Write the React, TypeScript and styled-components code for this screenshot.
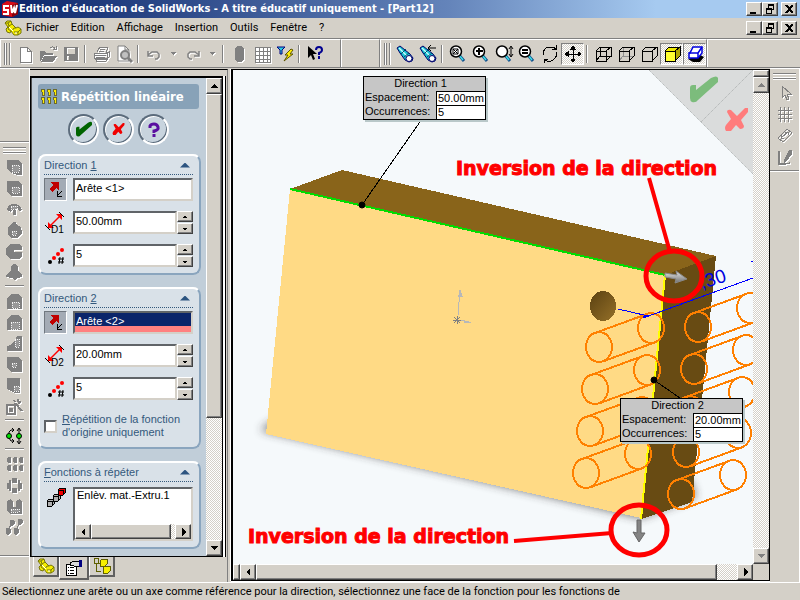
import React from "react";
import styled, { createGlobalStyle, css } from "styled-components";

const FACE = "#d4d0c8";
const UI = 'Roboto, "DejaVu Sans Condensed", sans-serif';
const PANEL = '"Liberation Sans", Arial, sans-serif';

const Global = createGlobalStyle`
  * { box-sizing: border-box; }
  body { margin: 0; background: ${FACE}; font: 11px/14px ${UI}; color: #000; overflow: hidden; }
  button, input { font: inherit; color: inherit; margin: 0; padding: 0; border-radius: 0; }
`;

const raised = css`
  background: ${FACE};
  border: 1px solid;
  border-color: #fff #404040 #404040 #fff;
  box-shadow: inset -1px -1px #808080;
`;
const sunken = css`
  border: 2px solid;
  border-color: #606468 #d4d0c8 #d4d0c8 #606468;
`;
const dither = css`
  background: repeating-conic-gradient(#fff 0 25%, ${FACE} 0 50%) 0 0 / 2px 2px;
`;

/* ---------- window frame ---------- */
const Window = styled.div`
  display: flex;
  flex-direction: column;
  height: 100vh;
`;
const TitleBar = styled.header`
  display: flex;
  align-items: center;
  height: 18px;
  padding: 0 3px 0 1px;
  background: linear-gradient(90deg, #0a246a 0%, #6484ba 56%, #a6caf0 82%);
  color: #fff;
`;
const Title = styled.h1`
  flex: 1;
  margin: 0;
  font: bold 11px/18px "DejaVu Sans Condensed", "DejaVu Sans", sans-serif;
  white-space: nowrap;
`;
const WinButtons = styled.div`
  display: flex;
  margin-left: auto;
  button:last-child { margin-left: 3px; }
`;
const WinButton = styled.button`
  ${raised}
  display: flex;
  width: 16px;
  height: 14px;
  color: #000;
`;
const MenuBar = styled.nav`
  display: flex;
  align-items: center;
  gap: 12px;
  height: 20px;
  padding: 0 3px 0 4px;
`;
const MenuItem = styled.button`
  border: 0;
  background: none;
`;
const AppMark = styled.span`
  display: flex;
  margin-right: -8px;
`;
const ToolStrip = styled.div`
  display: flex;
  height: 30px;
  border-top: 1px solid #808080;
  border-bottom: 1px solid #808080;
`;
const ToolGroup = styled.div<{ $w?: number }>`
  display: flex;
  align-items: center;
  flex: none;
  min-width: ${(p) => p.$w ?? 0}px;
  padding: 0 0 0 3px;
  border-top: 1px solid #fff;
  border-left: 1px solid #fff;
  border-right: 1px solid #808080;
`;
const ToolFill = styled.div`
  flex: 1;
  border-top: 1px solid #fff;
  border-left: 1px solid #fff;
`;
const Grip = styled.span`
  width: 6px;
  height: 22px;
  margin-right: 3px;
  border: solid;
  border-width: 0 1px;
  border-color: #808080;
  box-shadow: inset 1px 0 #fff, 1px 0 #fff, inset -2px 0 ${FACE}, inset -3px 0 #808080;
`;
const Rule = styled.span`
  width: 2px;
  height: 18px;
  margin: 0 3px 0 2px;
  border-left: 1px solid #808080;
  border-right: 1px solid #fff;
`;
const Tool = styled.button<{ $on?: boolean; $narrow?: boolean }>`
  display: flex;
  align-items: center;
  justify-content: center;
  width: ${(p) => (p.$narrow ? 16 : 23)}px;
  height: 22px;
  border: 1px solid transparent;
  background: none;
  ${(p) => p.$on && css`${dither} border-color: #808080 #fff #fff #808080;`}
`;
const Glyph = styled.svg<{ $off?: boolean; $smooth?: boolean }>`
  display: block;
  flex: none;
  overflow: visible;
  shape-rendering: ${(p) => (p.$smooth ? "auto" : "crispEdges")};
  ${(p) => p.$off && css`filter: drop-shadow(1px 1px 0 #fff);`}
`;

const Workspace = styled.main`
  display: flex;
  flex: 1;
  min-height: 0;
`;

/* ---------- side tool columns ---------- */
const SideTools = styled.div`
  display: flex;
  flex-direction: column;
  align-items: center;
  flex: none;
  width: 30px;
  border-top: 1px solid #fff;
  border-right: 1px solid #fff;
`;
const SideSpacer = styled.div`
  align-self: stretch;
  height: 74px;
  border-bottom: 1px solid #fff;
  box-shadow: inset 0 -1px #808080;
`;
const SideGrip = styled.span`
  width: 23px;
  height: 6px;
  margin: 4px 0 4px;
  border: solid #808080;
  border-width: 1px 0;
  box-shadow: inset 0 1px #fff, inset 0 -1px #fff, 0 1px #fff;
`;
const SideRule = styled.span`
  width: 19px;
  height: 2px;
  margin: 2px 0 4px;
  border-top: 1px solid #808080;
  border-bottom: 1px solid #fff;
`;
const SideTool = styled.button`
  display: flex;
  align-items: center;
  justify-content: center;
  width: 23px;
  height: 21px;
  border: 0;
  background: none;
`;
const SideEnd = styled.div<{ $top?: number }>`
  flex: 1;
  align-self: stretch;
  margin-top: ${(p) => p.$top ?? 0}px;
  border-top: 1px solid #808080;
  box-shadow: inset 0 1px #fff;
`;

/* ---------- property manager ---------- */
const Manager = styled.section`
  display: flex;
  flex-direction: column;
  flex: none;
  width: 198px;
  margin-top: 1px;
  border-top: 1px solid #000;
  border-right: 1px solid #808080;
  font: 11px/13px ${PANEL};
`;
const Frame = styled.div`
  display: flex;
  flex: 1;
  min-height: 0;
  margin: 6px 4px 0 0;
  padding-left: 1px;
  border: solid #000;
  border-width: 2px 1px 1px 1px;
  box-shadow: inset 1px 0 #505050, 2px 0 #fff, 3px 0 #000;
  background: ${FACE};
`;
const Sheet = styled.div`
  flex: 1;
  min-width: 0;
  padding: 6px 5px 0 6px;
  background: #c1ced9;
  overflow: hidden;
`;
const Heading = styled.h2`
  display: flex;
  align-items: center;
  gap: 3px;
  height: 25px;
  margin: 0 2px 0 0;
  padding-left: 3px;
  border-radius: 3px;
  background: #88a2b8;
  color: #fff;
  font: bold 13px/25px "DejaVu Sans Condensed", sans-serif;
  white-space: nowrap;
`;
const Actions = styled.div`
  display: flex;
  gap: 4px;
  margin: 5px 0 9px 30px;
`;
const Round = styled.button`
  display: flex;
  align-items: center;
  justify-content: center;
  width: 31px;
  height: 31px;
  border: 2px solid;
  border-color: #5c6c7c #fff #fff #5c6c7c;
  border-radius: 50%;
  box-shadow: inset 1px 1px #fff, inset -1px -1px #5c6c7c;
  background: #c8d4de;
`;
const Group = styled.fieldset`
  display: flex;
  flex-direction: column;
  gap: 10px;
  min-width: 0;
  margin: 0 0 12px;
  padding: 0 6px 6px 4px;
  border: 2px solid;
  border-color: #fff #8aa5be #8aa5be #fff;
  border-radius: 8px;
  background: #d9e1e8;
  color: #34597c;
`;
const GroupTitle = styled.div`
  display: flex;
  align-items: center;
  justify-content: space-between;
  height: 19px;
  margin-bottom: -7px;
  padding-right: 3px;
  border-bottom: 1px dotted #34597c;
`;
const Fold = styled.button`
  width: 10px;
  height: 5px;
  border: 0;
  background: #2c5480;
  clip-path: polygon(50% 0, 100% 100%, 0 100%);
`;
const Row = styled.div`
  display: flex;
  align-items: flex-start;
  gap: 6px;
  color: #000;
`;
const Flip = styled.button`
  display: flex;
  align-items: center;
  justify-content: center;
  flex: none;
  width: 23px;
  height: 23px;
  background: #a3abb5;
  border: 1px solid;
  border-color: #707880 #fff #fff #707880;
`;
const RowIcon = styled.label`
  display: flex;
  align-items: center;
  justify-content: center;
  flex: none;
  width: 23px;
  height: 23px;
`;
const Field = styled.input<{ $picked?: boolean }>`
  ${sunken}
  flex: 1;
  min-width: 0;
  height: 23px;
  padding: 0 2px 4px 1px;
  outline: 0;
  background: #fff;
  ${(p) => p.$picked && css`
    color: #fff;
    background: linear-gradient(#0a246a 0 13px, #ff8080 13px);
  `}
`;
const SpinField = styled.div`
  display: flex;
  flex: 1;
  min-width: 0;
`;
const Spinner = styled.span`
  display: flex;
  flex-direction: column;
  flex: none;
  width: 16px;
  height: 23px;
  justify-content: space-between;
`;
const SpinButton = styled.button`
  ${raised}
  display: flex;
  align-items: center;
  justify-content: center;
  height: 11px;
`;
const Check = styled.label`
  display: flex;
  align-items: center;
  gap: 5px;
  margin: 3px 0 2px;
  white-space: nowrap;
`;
const CheckBox = styled.input`
  ${sunken}
  appearance: none;
  flex: none;
  width: 13px;
  height: 13px;
  margin: 0;
  background: #fff;
`;
const List = styled.div`
  ${sunken}
  display: flex;
  flex-direction: column;
  justify-content: space-between;
  flex: 1;
  min-width: 0;
  height: 54px;
  margin-top: 2px;
  padding-top: 0;
  background: #fff;
`;
const ListItem = styled.span`
  padding-left: 2px;
`;
const Tabs = styled.div`
  display: flex;
  align-items: flex-start;
  height: 25px;
  padding-left: 3px;
`;
const Tab = styled.button<{ $active?: boolean }>`
  display: flex;
  align-items: center;
  justify-content: center;
  width: ${(p) => (p.$active ? 30 : 26)}px;
  height: ${(p) => (p.$active ? 23 : 20)}px;
  border: solid;
  border-width: 0 2px 2px 1px;
  border-color: #808080 #606060 #606060 #fff;
  background: ${FACE};
`;

/* ---------- scroll bars ---------- */
const ScrollTrack = styled.div<{ $across?: boolean }>`
  ${dither}
  display: flex;
  flex: ${(p) => (p.$across ? "0 0 15px" : "none")};
  flex-direction: ${(p) => (p.$across ? "row" : "column")};
  ${(p) => !p.$across && "width: 16px;"}
`;
const ScrollButton = styled.button`
  ${raised}
  display: flex;
  align-items: center;
  justify-content: center;
  flex: 0 0 16px;
`;
const Thumb = styled.div<{ $share: number }>`
  ${raised}
  flex: ${(p) => p.$share} 1 0;
`;
const Gap = styled.div<{ $share: number }>`
  flex: ${(p) => p.$share} 1 0;
`;
const Splitter = styled.div`
  ${raised}
  flex: 0 0 7px;
`;

/* ---------- model view ---------- */
const View = styled.section`
  display: flex;
  flex-direction: column;
  flex: 1;
  min-width: 0;
  margin: 1px 0 1px 3px;
  border: solid #000;
  border-width: 1px 1px 1px 2px;
  box-shadow: -1px 0 #fff, 0 1px #fff;
`;
const ViewRow = styled.div`
  display: flex;
  flex: 1;
  min-height: 0;
`;
const BottomBar = styled.div`
  display: flex;
  flex: 0 0 16px;
  padding-right: 16px;
  background: ${FACE};
`;
const BottomTrack = styled.div`
  ${dither}
  display: flex;
  flex: 1;
  min-width: 0;
`;
const Canvas = styled.div`
  position: relative;
  flex: 1;
  min-width: 0;
  overflow: hidden;
  background: #f5f9fb;
`;
const Scene = styled.svg`
  display: block;
  width: 100%;
  height: 100%;
`;
const Corner = styled.svg`
  position: absolute;
  top: 0;
  right: 0;
`;
const Callout = styled.div<{ $x: number; $y: number }>`
  position: absolute;
  left: ${(p) => p.$x}px;
  top: ${(p) => p.$y}px;
  display: grid;
  grid-template-columns: 72px 49px;
  grid-auto-rows: 14px;
  border: 1px solid #000;
  background: #c6c6c6;
  box-shadow: 2px 2px #b9c8c9;
  font: 11px/13px ${PANEL};
`;
const CalloutTitle = styled.strong`
  grid-column: 1 / -1;
  padding-right: 8px;
  font-weight: normal;
  text-align: center;
`;
const CalloutLabel = styled.label`
  padding-left: 1px;
`;
const CalloutValue = styled.input`
  width: 49px;
  height: 14px;
  padding: 0 0 1px 1px;
  border: solid #000;
  border-width: 1px 0 0 1px;
  outline: 0;
  background: #fff;
  line-height: 12px;
`;
const Status = styled.footer`
  height: 18px;
  padding: 2px 2px 0;
  border-top: 1px solid #fff;
  white-space: nowrap;
  overflow: hidden;
`;

/* ---------- glyphs ---------- */
type ArrowDir = "up" | "down" | "left" | "right";
const arrowPoints: Record<ArrowDir, string> = {
  up: "3,0 4,0 7,4 0,4",
  down: "0,0 7,0 4,4 3,4",
  left: "4,0 4,8 0,4",
  right: "1,0 1,8 5,4",
};
const Arrow = ({ dir, color = "#000" }: { dir: ArrowDir; color?: string }) => {
  const flat = dir === "up" || dir === "down";
  return (
    <Glyph width={flat ? 7 : 5} height={flat ? 4 : 8}>
      <polygon points={arrowPoints[dir]} fill={color} />
    </Glyph>
  );
};
const TinyArrow = ({ up }: { up?: boolean }) => (
  <Glyph width="4" height="2">
    <path d={up ? "M1 0h2v1h1v1H0V1h1z" : "M0 0h4v1H3v1H1V1H0z"} />
  </Glyph>
);

const winGlyphs: Record<string, React.ReactNode> = {
  Réduire: <path d="M3 9h6v2H3z" />,
  Restaurer: <path d="M5 1h6v6H9v4H3V5h2zM6 3v2h3v1h1V3zM4 7v3h4V7z" fillRule="evenodd" />,
  Fermer: <path d="M3 2h2l2 2 2-2h2v1L8 6l3 3v1H9L7 8l-2 2H3V9l3-3-3-3z" />,
};
const WindowButtons = () => (
  <WinButtons>
    {Object.entries(winGlyphs).map(([name, g]) => (
      <WinButton key={name} aria-label={name}>
        <Glyph width="14" height="12">{g}</Glyph>
      </WinButton>
    ))}
  </WinButtons>
);

const PartIcon = () => (
  <Glyph width="18" height="16" $smooth>
    <g stroke="#77770a" strokeLinejoin="round" fill="#f4ec00">
      <path d="M1 3l2-2h4l1 3 4 4 2-1 3 2v4l-3 2h-4l-3-4-1 2-3-1-1-3 2-2z" />
      <path d="M1 3h3l1 3-1 3M4 3l3-2M5 6l3-2M8 11l2-3 2 0M10 12h4l3-3M14 12v3M4 9l3 2" fill="none" />
    </g>
    <path d="M5 7l4 4M11 13h2" stroke="#fff" />
  </Glyph>
);

const G = "#808080";
const cube = (
  <>
    <path d="M2 6h10v10H2zM6 2h11v9H6z" />
    <path d="M2 6l4-4M12 6l5-4M12 16l5-5M2 16l4-5" />
  </>
);
const openCube = <path d="M2 6h10v10H2zM2 6l4-4h11l-5 4M17 2v9l-5 5" />;
const lens = (inner: React.ReactNode, extra?: React.ReactNode) => (
  <>
    <path d="M10 10l5 6" stroke="#14508c" strokeWidth="3" />
    <path d="M10 10l4 5" stroke="#3ce0e8" strokeWidth="1.5" />
    <circle cx="7" cy="6.5" r="5.5" fill="#fff" stroke="#000" strokeWidth="1.5" />
    {inner}
    {extra}
  </>
);
const torch = (
  <>
    <path d="M1 3l3-2 10 8 3 4-1 3-3 1-4-2-5-7z" fill="#18c0d0" stroke="#00006b" />
    <path d="M3 3l8 8" stroke="#c8ffff" strokeWidth="1.5" />
    <path d="M5 9l5-5M8 12l5-4" stroke="#005070" />
    <circle cx="13" cy="13.5" r="3" fill="#fff" stroke="#00006b" />
  </>
);

const glyphs: Record<string, React.ReactNode> = {
  Nouveau: <path d="M4 2h7l4 4v11H4zM11 2v4h4" fill="#fff" stroke={G} />,
  Ouvrir: <g><path d="M1 6h5l1 2h7v2H5l-3 6H1zM5 11h13l-4 6H2z" fill={G} /><path d="M11 3c3-2 4-1 5 1M14 4h3V1" fill="none" stroke={G} /></g>,
  Enregistrer: <path fillRule="evenodd" d="M2 2h14v14H2zM5 3v6h8V3zM5 11h2v4H5z" fill={G} />,
  Imprimer: <g stroke={G} fill="none"><path d="M5 7l3-5h8l-2 6M2 8h13v5H2zM4 13v3h10l3-4V7l-2 1M8 4h5M7 6h5M3 10h11M4 12h9" /><path d="M3 14h11" strokeWidth="2" /></g>,
  Aperçu: <g><path d="M3 1h7l4 4v11H3zM10 1v4h4" fill="#fff" stroke={G} /><circle cx="10" cy="10" r="4" fill="#c0c0c0" stroke={G} strokeWidth="2" /><path d="M13 13l4 4" stroke={G} strokeWidth="3" /></g>,
  Annuler: <path d="M3 6v5h5M3 10l4-3h5l2 2v3l-2 2h-2" fill="none" stroke={G} strokeWidth="1.5" />,
  Rétablir: <path d="M15 6v5h-5M15 10l-4-3H6L4 9v3l2 2h2" fill="none" stroke={G} strokeWidth="1.5" />,
  Reconstruire: <path d="M7 1h4l3 3v10l-3 3H7l-2-3V4z" fill={G} />,
  Grille: <g><path d="M2 2h15v15H2z" fill="#fff" stroke={G} /><path d="M6 2v15M10 2v15M14 2v15M2 6h15M2 10h15M2 14h15" stroke={G} /></g>,
  Filtre: <g><path d="M1 2h8L6 5v4H4V5z" fill="#2ccce0" stroke="#000080" /><path d="M15 4l-6 6h3l-4 6 9-7h-3l3-4z" fill="#ffee00" stroke="#5c5400" /></g>,
  Aide: <g><path d="M2 1v12l3-3 2 5 2-1-2-5h4z" /><path d="M10 5q0-3 3-3t3 3q0 2-3 3v2M13 11v3" fill="none" stroke="#000090" strokeWidth="2" /></g>,
  Orientation: torch,
  "Vue précédente": <g>{torch}<path d="M9 3h8M9 3l3-3M9 3l3 3" stroke="#000" fill="none" /></g>,
  "Zoom au mieux": lens(<path d="M4 4h5v5H4zM4 4l5 5M9 4l-5 5" fill="none" stroke="#000" />),
  "Zoom fenêtre": lens(<path d="M7 3v7M4 6h7" stroke="#000" strokeWidth="2" />),
  "Zoom avant": lens(null, <path d="M16 2v9M14 4l2-3 2 3M14 9l2 3 2-3" fill="none" stroke="#000" />),
  "Zoom sélection": lens(<path d="M4 5h6M4 8h6" stroke="#000" strokeWidth="2" />),
  Rotation: <path d="M2 10q0-7 6-8h4l3 2M15 0v4h-4M16 7q0 7-6 9H6l-3-2M3 18v-4h4" fill="none" stroke="#000" />,
  Translation: <path d="M9 2v14M2 9h14M7 4l2-3 2 3zM7 14l2 3 2-3zM4 7L1 9l3 2zM14 7l3 2-3 2z" stroke="#000" />,
  Filaire: <g fill="none" stroke="#000">{cube}</g>,
  "Arêtes cachées": <g fill="none" stroke="#000"><path d="M6 2v9h11M2 16l4-5" stroke="#909090" />{openCube}</g>,
  "Lignes cachées supprimées": <g fill="none" stroke="#000">{openCube}</g>,
  "Image ombrée": <g stroke="#000"><path d="M2 6l4-4h11v9l-5 5H2z" fill="#f0ea00" /><path d="M2 6h10v10H2z" fill="#ffff30" /><path d="M12 6l5-4v9l-5 5z" fill="#b0a800" /></g>,
  Ombres: <g><path d="M2 14l5 3h7l4-5-4-2z" fill="#000" /><path d="M7 2h9v6l-4 5H3V8h1z" fill="#fff" stroke="#0000e0" strokeWidth="1.5" /><path d="M3 8h9v5M12 8l4-6" fill="none" stroke="#0000e0" strokeWidth="1.5" /></g>,
};
const OFF = ["Nouveau", "Ouvrir", "Enregistrer", "Imprimer", "Aperçu", "Annuler", "Rétablir", "Reconstruire", "Grille"];
const ON = ["Translation", "Image ombrée", "Ombres"];
const SMOOTH = ["Aperçu", "Orientation", "Vue précédente", "Zoom au mieux", "Zoom fenêtre", "Zoom avant", "Zoom sélection", "Aide", "Filtre", "Ombres", "Annuler", "Rétablir"];

const renderTools = (names: string[]) =>
  names.map((name, i) => {
    if (name === "|") return <Rule key={i} />;
    if (name === "v")
      return (
        <Tool key={i} $narrow aria-label="Options">
          <Glyph width="6" height="3" $off><path d="M0 0h6L3 3z" fill={G} /></Glyph>
        </Tool>
      );
    return (
      <Tool key={i} $on={ON.includes(name)} aria-label={name}>
        <Glyph width="18" height="18" $off={OFF.includes(name)} $smooth={SMOOTH.includes(name)}>{glyphs[name]}</Glyph>
      </Tool>
    );
  });

const speck = (x: number, y: number, w: number, h: number) => (
  <path d={`M${x} ${y}h${w}v${h}h-${w}z`} fill="#989898" stroke="#f4f4f4" strokeDasharray="1 1" />
);
const side: Record<string, React.ReactNode> = {
  Extrusion: <g><path d="M1 1h11l4 4v11h-4L5 14 1 10z" />{speck(6, 6, 7, 7)}</g>,
  "Enlèvement de matière": <g><path d="M1 1h11l4 4v11H5l-4-4z" />{speck(6, 7, 7, 6)}</g>,
  "Bossage avec révolution": <g><path d="M1 9q1-6 7-6t8 6l-3 1-2-3-1 1v6H7V8L5 11z" />{speck(5, 5, 6, 3)}</g>,
  "Enlèvement avec révolution": <g><path d="M2 5l4-3 1-2h3v2l5 3 1 6-4 5H6l-4-3z" />{speck(6, 9, 4, 4)}</g>,
  Balayage: <path d="M4 1h9l3 3v3H8v2h8v4l-3 3H4l-4-4V5z" />,
  Lissage: <path d="M7 0h3l2 3v4l4 4v2l-5 1-2 2H8l-2-2-6-1v-2l5-4V3z" />,
  Congé: <g><path d="M5 1h7l4 4v11H1V5z" />{speck(6, 9, 7, 6)}</g>,
  Chanfrein: <g><path d="M5 1h7l4 4v11H1V5z" />{speck(5, 8, 8, 7)}</g>,
  Nervure: <g><path d="M11 1h5v15H1v-5l4-1 4-5z" />{speck(9, 4, 4, 8)}</g>,
  Coque: <g><path d="M1 1h12l3 4v11H5l-4-4z" />{speck(6, 7, 4, 4)}</g>,
  Dépouille: <g><path d="M1 1h13v15H9l-8-4z" />{speck(8, 9, 5, 5)}</g>,
  Assistance: <g><path d="M1 7h8v9H1z" fill="none" stroke={G} strokeWidth="2" /><path d="M3 10h4v4H3z" /><path d="M9 5l7 8M8 2l1 2M12 1v3M15 4l-3 1" stroke={G} strokeWidth="2" /></g>,
  "Répétition linéaire": <path d="M1 2l1-1h2l1 1v4L4 7H2L1 6zM7 2l1-1h2l1 1v4l-1 1H8L7 6zM13 2l1-1h2l1 1v4l-1 1h-2l-1-1zM1 10l1-1h2l1 1v4l-1 1H2l-1-1zM7 10l1-1h2l1 1v4l-1 1H8l-1-1zM13 10l1-1h2l1 1v4l-1 1h-2l-1-1z" />,
  "Répétition circulaire": <path d="M6 1h5v5H6zM1 6h4v6H1zM12 6h4v6h-4zM6 11h5v5H6zM3 3h2v3H3zM12 3h2v3h-2zM3 12h2v2H3zM12 12h2v2h-2z" />,
  Symétrie: <g><path d="M1 3l4-2 2 3v5h3V3l4-2 2 3v12H4l-3-3z" />{speck(5, 11, 8, 3)}</g>,
  "Répétition pilotée": <path d="M5 1h2l1 1v3L7 6H5L4 5V2zM13 0h2l1 1v3l-1 1h-2l-1-1V1zM1 9h2l1 1v4l-1 1H1l-1-1v-4zM9 9h2l1 1v4l-1 1H9l-1-1v-4zM5 6L3 9M13 5l-2 4" stroke={G} />,
};
const sideTools = (names: string[]) =>
  names.map((n) => (
    <SideTool key={n} aria-label={n}>
      <Glyph width="17" height="17" fill={G} $off>{side[n]}</Glyph>
    </SideTool>
  ));

const right: Record<string, React.ReactNode> = {
  Sélection: <path d="M6 1v12l3-3 2 5 2-1-2-5h4z" fill={FACE} stroke={G} />,
  Quadrillage: <path d="M4 1v15M8 1v15M12 1v15M2 4h14M2 8h14M2 12h14" stroke={G} strokeWidth="1" />,
  Cotation: <path d="M2 11l9-9 5 4-9 9zM5 11l7-6M5 8v3h3M9 5h3v3" fill="none" stroke={G} />,
  Esquisse: <g><path d="M3 3v13h6l5-1" fill="none" stroke={G} strokeWidth="1.5" /><path d="M8 12L13 2h3v4l-5 7-3 2z" fill={G} /></g>,
};

const FlipIcon = () => (
  <Glyph width="17" height="17">
    <path d="M4 1h8v8L9 7l-4 4-3-3 4-4z" fill="#c00000" />
    <path d="M15 10l-4 4M10 10v5h5" fill="none" stroke="#000" strokeWidth="1" />
  </Glyph>
);
const DistanceIcon = ({ n }: { n: number }) => (
  <Glyph width="22" height="22" $smooth>
    <path d="M5 14L15 4" stroke="#f00" strokeWidth="1.5" />
    <path d="M3 16v-6l6 6zM17 2v6l-6-6z" fill="#f00" />
    <path d="M0 13l5 5M14 0l5 5" stroke="#000" />
    <text x="6" y="21" fontFamily="Liberation Sans" fontSize="10" fill="#000">{`D${n}`}</text>
  </Glyph>
);
const CountIcon = () => (
  <Glyph width="20" height="20" $smooth>
    <circle cx="4" cy="16" r="2" />
    <circle cx="8" cy="12" r="2" fill="#f00" />
    <circle cx="12" cy="8" r="2" fill="#f00" />
    <circle cx="16" cy="4" r="2" fill="#f00" />
    <path d="M14 11l-1 7M17 11l-1 7M12 13h6M12 16h6" stroke="#000" />
  </Glyph>
);

/* ---------- parts ---------- */
const Spin = ({ label, value, icon }: { label: string; value: string; icon: React.ReactNode }) => {
  const id = React.useId();
  return (
    <Row>
      <RowIcon htmlFor={id} aria-label={label}>{icon}</RowIcon>
      <SpinField>
        <Field id={id} defaultValue={value} />
        <Spinner>
          <SpinButton aria-label={`${label} +`}><TinyArrow up /></SpinButton>
          <SpinButton aria-label={`${label} -`}><TinyArrow /></SpinButton>
        </Spinner>
      </SpinField>
    </Row>
  );
};

const Direction = ({ n, spacing, picked, children }: { n: number; spacing: string; picked?: boolean; children?: React.ReactNode }) => (
  <Group>
    <GroupTitle>
      <span>Direction <u>{n}</u></span>
      <Fold aria-label="Replier" />
    </GroupTitle>
    <Row>
      <Flip aria-label="Inverser la direction"><FlipIcon /></Flip>
      <Field aria-label={`Direction ${n}`} defaultValue={`Arête <${n}>`} $picked={picked} />
    </Row>
    <Spin label="Espacement" value={spacing} icon={<DistanceIcon n={n} />} />
    <Spin label="Occurrences" value="5" icon={<CountIcon />} />
    {children}
  </Group>
);

const Flag = ({ n, spacing, x, y }: { n: number; spacing: string; x: number; y: number }) => (
  <Callout $x={x} $y={y}>
    <CalloutTitle>Direction {n}</CalloutTitle>
    <CalloutLabel htmlFor={`s${n}`}>Espacement:</CalloutLabel>
    <CalloutValue id={`s${n}`} defaultValue={spacing} />
    <CalloutLabel htmlFor={`o${n}`}>Occurrences:</CalloutLabel>
    <CalloutValue id={`o${n}`} defaultValue="5" />
  </Callout>
);

const Cylinder = ({ x, y }: { x: number; y: number }) => (
  <g>
    <ellipse cx={x} cy={y} rx="13" ry="15" />
    <ellipse cx={x + 52} cy={y - 19} rx="13" ry="15" />
    <path d={`M${x - 4} ${y - 14}l52 -19M${x + 5} ${y + 14}l52 -19`} />
  </g>
);
const cylinders = [
  [599, 347], [595, 389], [590, 431], [586, 473],
  [698, 327], [694, 369], [690, 411], [686, 452], [681, 494],
];

const checkPath = "M0 11q0-3 3-3h3v5L21 1q6-3 7 0v4L8 23q-2 3-6 2-2-1-2-4z";
const crossPath = "M2 4q0-3 4-2l6 6 8-8h3v4l-7 8 3 6q0 3-4 3l-4-4-5 6H1q-2-3 0-6l5-6z";

const Model = () => (
  <Scene>
    <defs>
      <filter id="soft" x="-20%" y="-50%" width="140%" height="200%"><feGaussianBlur stdDeviation="5" /></filter>
      <linearGradient id="bore" x1="0" y1="0" x2="1" y2="1">
        <stop offset="0" stopColor="#5a4112" /><stop offset="1" stopColor="#957028" />
      </linearGradient>
      <linearGradient id="steel" x1="0" y1="0" x2="0" y2="1">
        <stop offset="0" stopColor="#e8e8e8" /><stop offset="1" stopColor="#707070" />
      </linearGradient>
    </defs>
    <g transform="translate(-233 -70)" fill="none">
      <path d="M260 430L290 410 690 480 696 497 641 518z" fill="#333" opacity=".7" filter="url(#soft)" />
      <g shapeRendering="crispEdges">
        <path d="M290 189L342 170 716 256 665 275z" fill="#89641a" />
        <path d="M665 275L716 256 692 502 641 519z" fill="#684b13" />
        <path d="M290 189L665 275 641 518 266 434z" fill="#ffda85" />
        <ellipse cx="603" cy="306" rx="13" ry="15" fill="url(#bore)" />
        <path d="M290 189L665 275" stroke="#00dc00" strokeWidth="2" />
        <path d="M665 275L641 519" stroke="#ff0" strokeWidth="2" />
        <g stroke="#ff8000" strokeWidth="2">
          {cylinders.map(([x, y]) => <Cylinder key={`${x}-${y}`} x={x} y={y} />)}
        </g>
        <path d="M618 309L648 316M643 318L753 278M643 317l6-2M751 261h2" stroke="#0000ff" />
        <path d="M422 119L362 205M654 380L680 398" stroke="#000" />
        <path d="M458 315L460 290M461 320l8 2" stroke="#b8b8b8" />
        <path d="M458 297l2-9 3 9zM464 320l8 3-8 0z" fill="#b8b8b8" />
        <path d="M457 316v8M453 320h8M454 317l6 6M460 317l-6 6" stroke="#808080" />
      </g>
      <circle cx="362" cy="205" r="3" fill="#000" stroke="#000" />
      <circle cx="654" cy="380" r="3" fill="#000" stroke="#000" />
      <text x="702" y="289" transform="rotate(-17 702 289)" fontFamily="Liberation Sans" fontSize="19" fill="#0000e0">,30</text>
      <path d="M665 273l12 2-1-4 11 8-12 4 1-4-11-2z" fill="url(#steel)" stroke="#888" />
      <path d="M637 520h4v13h4l-6 9-6-10 4 1z" fill="#848484" stroke="#666" />
      <g stroke="#f00" strokeWidth="5">
        <ellipse cx="674" cy="276" rx="28" ry="25" />
        <ellipse cx="639" cy="530" rx="28" ry="25" />
        <path d="M649 178L670 252M514 541L612 533" strokeWidth="4" />
      </g>
      <g fill="#f00" stroke="#f00" strokeWidth="1" fontFamily="DejaVu Sans" fontWeight="700" fontSize="19">
        <text x="456" y="175">Inversion de la direction</text>
        <text x="248" y="543">Inversion de la direction</text>
      </g>
    </g>
  </Scene>
);

export default function App() {
  return (
    <Window>
      <Global />
      <TitleBar>
        <Glyph width="18" height="18" $smooth>
          <path d="M1 4l5-3 11 2v11l-6 3L1 15z" fill="#d80c18" />
          <path d="M11 5l6-2v11l-6 3z" fill="#8c0008" />
          <path d="M8 6H3v4h4v4H2M10 5l1 8 2-5 1 5 2-8" fill="none" stroke="#fff" strokeWidth="2" />
        </Glyph>
        <Title>Edition d'éducation de SolidWorks - A titre éducatif uniquement - [Part12]</Title>
        <WindowButtons />
      </TitleBar>
      <MenuBar>
        <AppMark><PartIcon /></AppMark>
        {["Fichier", "Edition", "Affichage", "Insertion", "Outils", "Fenêtre", "?"].map((m) => (
          <MenuItem key={m}>{m}</MenuItem>
        ))}
        <WindowButtons />
      </MenuBar>
      <ToolStrip>
        <ToolGroup $w={341}>
          <Grip />
          {renderTools(["Nouveau", "Ouvrir", "Enregistrer", "|", "Imprimer", "Aperçu", "|", "Annuler", "v", "Rétablir", "v", "|", "Reconstruire", "Grille", "Filtre", "|", "Aide"])}
        </ToolGroup>
        <ToolGroup $w={39} />
        <ToolGroup>
          <Grip />
          {renderTools(["Orientation", "Vue précédente", "|", "Zoom au mieux", "Zoom fenêtre", "Zoom avant", "Zoom sélection", "Rotation", "Translation", "|", "Filaire", "Arêtes cachées", "Lignes cachées supprimées", "Image ombrée", "Ombres"])}
        </ToolGroup>
        <ToolFill />
      </ToolStrip>

      <Workspace>
        <SideTools>
          <SideSpacer />
          <SideGrip />
          {sideTools(["Extrusion", "Enlèvement de matière", "Bossage avec révolution", "Enlèvement avec révolution", "Balayage", "Lissage"])}
          <SideRule />
          {sideTools(["Congé", "Chanfrein", "Nervure", "Coque", "Dépouille", "Assistance"])}
          <SideRule />
          <SideTool aria-label="Déplacer">
            <Glyph width="17" height="17" $smooth>
              <path d="M8 3H5L3 5v6l2 3h3M6 1l2 2-2 2M6 12l2 2-2 2M13 2v14M11 4l2-3 2 3M11 14l2 3 2-3" fill="none" stroke="#000" />
              <circle cx="3" cy="9" r="2.5" fill="#00e000" stroke="#000" />
              <circle cx="13" cy="9" r="2.5" fill="#00e000" stroke="#000" />
            </Glyph>
          </SideTool>
          <SideRule />
          {sideTools(["Répétition linéaire", "Répétition circulaire", "Symétrie", "Répétition pilotée"])}
          <SideEnd $top={17} />
        </SideTools>

        <Manager>
          <Frame>
            <Sheet>
              <Heading>
                <Glyph width="17" height="17">
                  {[1, 7, 13].map((x) => [2, 10].map((y) => (
                    <g key={`${x}-${y}`}>
                      <path d={`M${x - 1} ${y - 1}h4v7h-3v-4h-1z`} fill="#6b6b30" />
                      <path d={`M${x} ${y}h2v5h-1v-3h-1z`} fill="#ffee00" />
                    </g>
                  )))}
                </Glyph>
                Répétition linéaire
              </Heading>
              <Actions>
                <Round aria-label="OK">
                  <Glyph width="16" height="15" viewBox="0 0 28 26" $smooth><path d={checkPath} fill="#006400" /></Glyph>
                </Round>
                <Round aria-label="Annuler">
                  <Glyph width="13" height="14" viewBox="0 0 23 27" $smooth><path d={crossPath} fill="#f00000" /></Glyph>
                </Round>
                <Round aria-label="Aide">
                  <Glyph width="12" height="16" $smooth>
                    <path d="M2 6V4q1-2 4-2t4 3-4 4v2M6 12v3" fill="none" stroke="#5a0fa0" strokeWidth="3" />
                  </Glyph>
                </Round>
              </Actions>

              <Direction n={1} spacing="50.00mm" />
              <Direction n={2} spacing="20.00mm" picked>
                <Check>
                  <CheckBox type="checkbox" />
                  <span><u>R</u>épétition de la fonction<br />d'origine uniquement</span>
                </Check>
              </Direction>
              <Group>
                <GroupTitle>
                  <span><u>F</u>onctions à répéter</span>
                  <Fold aria-label="Replier" />
                </GroupTitle>
                <Row>
                  <RowIcon as="span">
                    <Glyph width="18" height="18" stroke="#000">
                      <path d="M0 13l2-2h5v5l-2 2H0z" fill="#b0b0b0" />
                      <path d="M6 8l2-2h5v5l-2 2H6z" fill="#b0b0b0" />
                      <path d="M11 2l2-2h5v5l-2 2h-5z" fill="#f00000" />
                      <path d="M0 13h5v5M6 8h5v5M11 2h5v5" fill="none" />
                    </Glyph>
                  </RowIcon>
                  <List>
                    <ListItem>Enlèv. mat.-Extru.1</ListItem>
                    <ScrollTrack $across>
                      <ScrollButton aria-label="Gauche"><Arrow dir="left" /></ScrollButton>
                      <Thumb $share={20} />
                      <Gap $share={1} />
                      <ScrollButton aria-label="Droite"><Arrow dir="right" /></ScrollButton>
                    </ScrollTrack>
                  </List>
                </Row>
              </Group>
            </Sheet>
            <ScrollTrack>
              <ScrollButton aria-label="Haut"><Arrow dir="up" /></ScrollButton>
              <Thumb $share={320} />
              <Gap $share={121} />
              <ScrollButton aria-label="Bas"><Arrow dir="down" /></ScrollButton>
            </ScrollTrack>
          </Frame>
          <Tabs>
            <Tab aria-label="Arbre de création"><PartIcon /></Tab>
            <Tab $active aria-label="Propriétés">
              <Glyph width="18" height="16">
                <path d="M1 4h10v11H1z" fill="#fff" stroke="#000" />
                <path d="M3 7h1M3 10h1M3 13h1M5 7h4M5 10h4M5 13h4" stroke="#000" />
                <path d="M5 3l4-2h5v5l-4 1-2-2H5z" fill="#d8d8d8" stroke="#000" />
                <path d="M14 0h3v7h-3z" fill="#000080" />
              </Glyph>
            </Tab>
            <Tab aria-label="Configurations">
              <Glyph width="18" height="16">
                <path d="M1 0h4v5H1zM3 5v8h5M3 5h5" fill="none" stroke="#606000" />
                <path d="M7 3l2-2h5v5l-2 2H7zM10 10l2-2h5v5l-2 2h-5z" fill="#f8f000" stroke="#606000" />
              </Glyph>
            </Tab>
          </Tabs>
        </Manager>

        <View>
          <ViewRow>
            <Canvas>
              <Model />
              <Flag n={1} spacing="50.00mm" x={130} y={6} />
              <Flag n={2} spacing="20.00mm" x={387} y={328} />
              <Corner width="104" height="104">
                <path d="M0 0h104v104z" fill="#dadcdc" />
                <path d="M0 0l104 104M52 52L104 0" stroke="#a8acac" strokeDasharray="1 1" />
                <path d={checkPath} transform="translate(41 7)" fill="#7cbc7c" />
                <path d={crossPath} transform="translate(76 38)" fill="#ff7c7c" />
              </Corner>
            </Canvas>
            <ScrollTrack>
              <Splitter />
              <ScrollButton aria-label="Haut"><Arrow dir="up" color="#808080" /></ScrollButton>
              <Gap $share={1} />
              <ScrollButton aria-label="Bas"><Arrow dir="down" color="#808080" /></ScrollButton>
            </ScrollTrack>
          </ViewRow>
          <BottomBar>
            <BottomTrack>
              <Splitter />
              <ScrollButton aria-label="Gauche"><Arrow dir="left" /></ScrollButton>
              <Thumb $share={461} />
              <Gap $share={20} />
              <ScrollButton aria-label="Droite"><Arrow dir="right" /></ScrollButton>
            </BottomTrack>
          </BottomBar>
        </View>

        <SideTools>
          <SideGrip />
          {Object.entries(right).map(([n, g]) => (
            <SideTool key={n} aria-label={n}>
              <Glyph width="17" height="17" $off>{g}</Glyph>
            </SideTool>
          ))}
          <SideEnd $top={3} />
        </SideTools>
      </Workspace>

      <Status>
        Sélectionnez une arête ou un axe comme référence pour la direction, sélectionnez une face de la fonction pour les fonctions de
      </Status>
    </Window>
  );
}
